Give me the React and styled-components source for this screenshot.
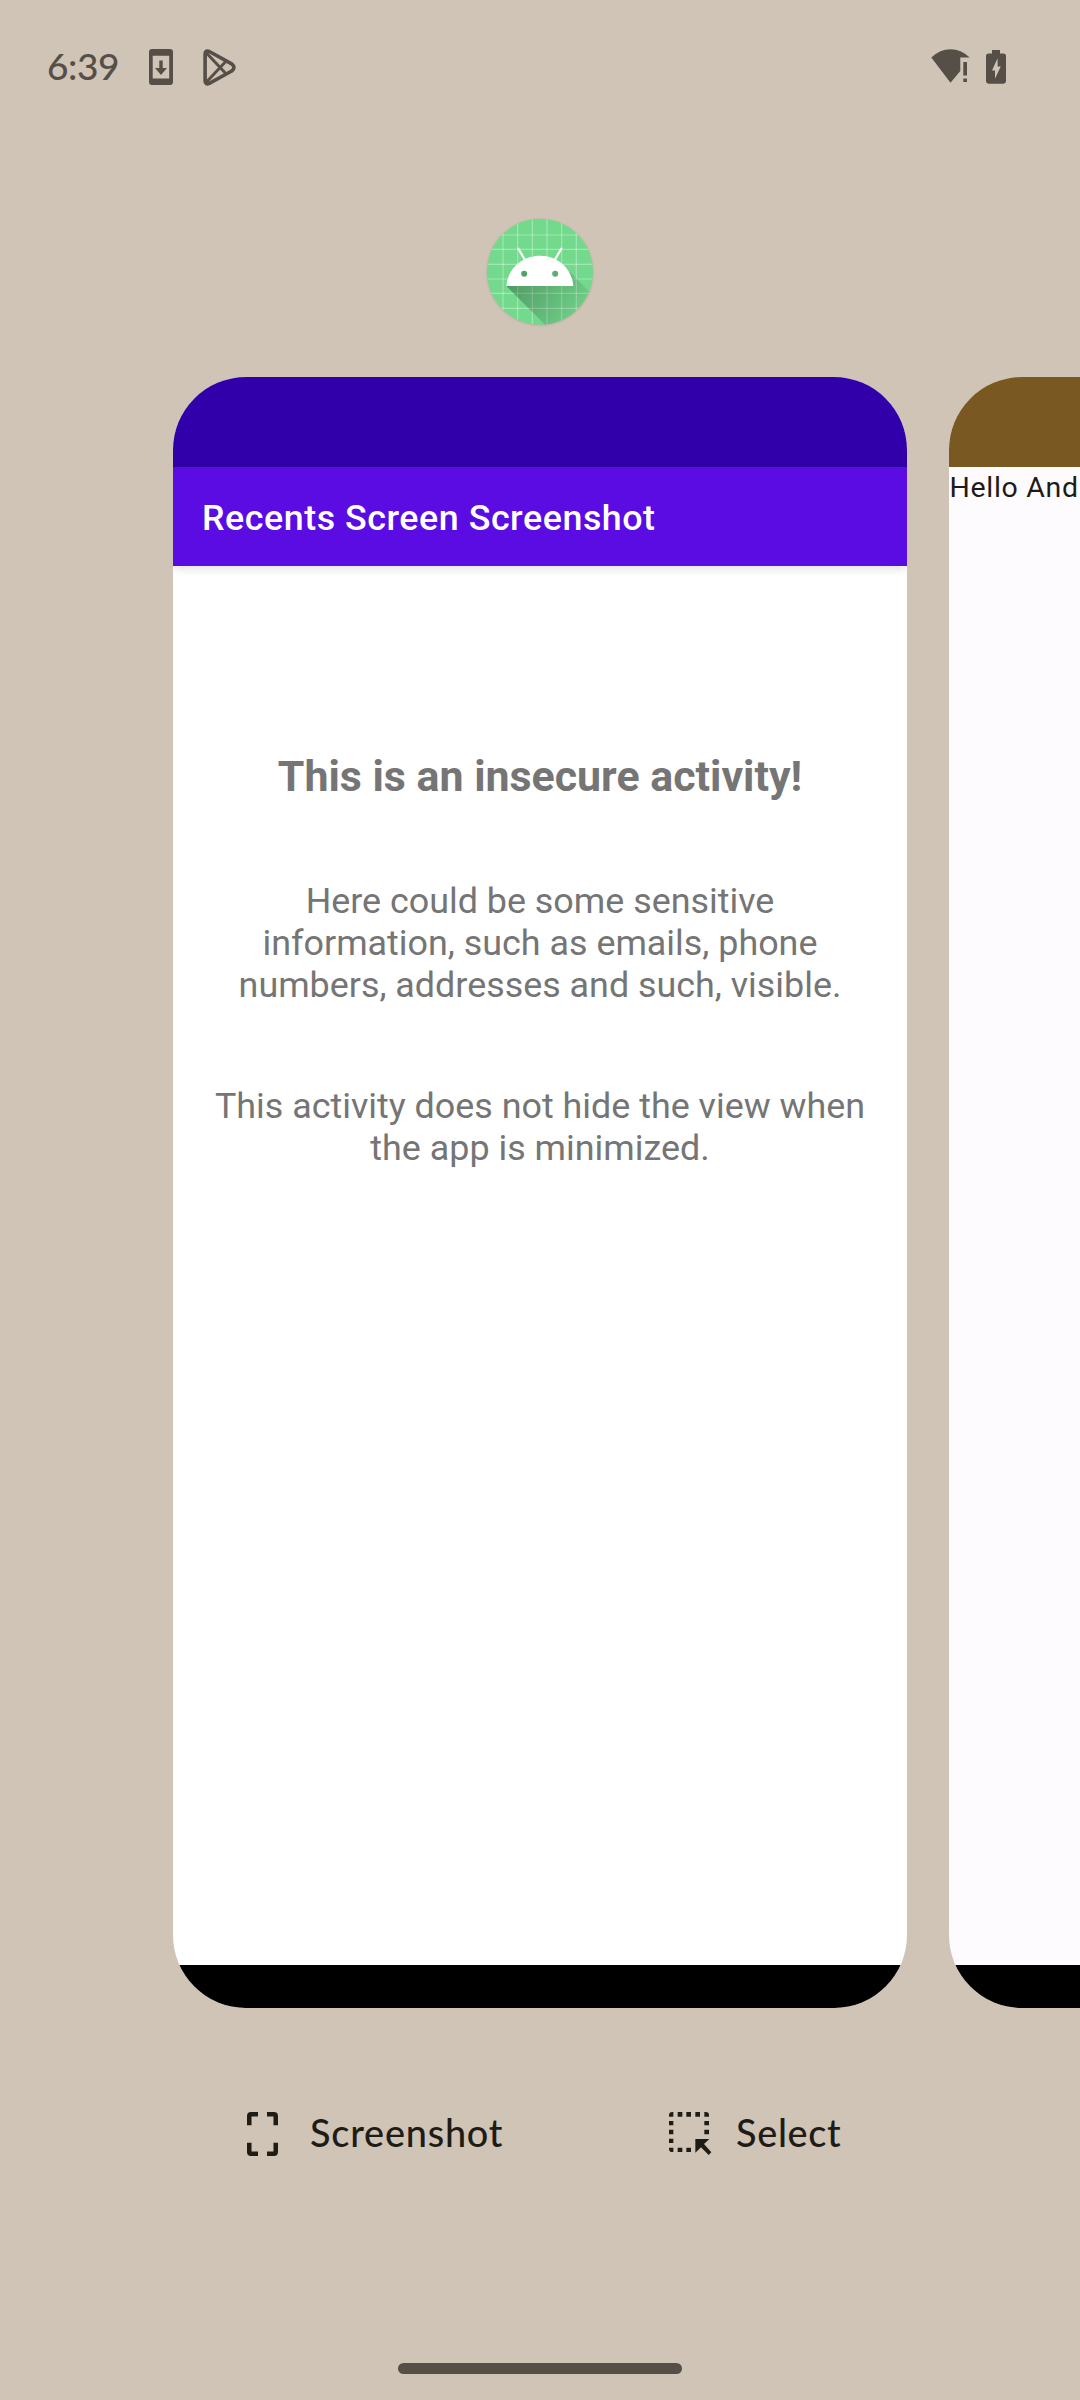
import React from "react";
import styled, { createGlobalStyle } from "styled-components";

const GlobalStyle = createGlobalStyle`
  *, *::before, *::after { box-sizing: border-box; }
  body { margin: 0; background: #d0c4b6; }
`;

const Screen = styled.main`
  width: 1080px;
  height: 2400px;
  overflow: hidden;
  display: flex;
  flex-direction: column;
  background: #d0c4b6;
  font-family: Roboto, "Liberation Sans", sans-serif;
`;

const StatusBar = styled.header`
  height: 134px;
  padding: 0 74px 0 47px;
  display: flex;
  align-items: center;
  justify-content: space-between;
  color: #554f48;
`;

const StatusGroup = styled.div`
  display: flex;
  align-items: center;
  gap: ${(p) => p.$gap}px;
`;

const Clock = styled.time`
  width: 72px;
  padding-bottom: 2px;
  font: 500 37px/44px Lato, sans-serif;
  letter-spacing: -0.4px;
  white-space: nowrap;
`;

const Glyph = styled.svg`
  display: block;
  flex: none;
  width: ${(p) => p.$w}px;
  height: ${(p) => p.$h}px;
`;

const IconRow = styled.div`
  height: 243px;
  padding-top: 71px;
  display: flex;
  justify-content: center;
`;

const Carousel = styled.section`
  height: 1631px;
  padding-left: 173px;
  display: flex;
  gap: 42px;
`;

const Card = styled.article`
  flex: none;
  width: 734px;
  height: 1631px;
  border-radius: 73px;
  overflow: hidden;
  display: flex;
  flex-direction: column;
  background: ${(p) => p.$bg};
`;

const CardStatus = styled.div`
  flex: none;
  height: 89.5px;
  background: ${(p) => p.$bg};
`;

const AppBar = styled.div`
  flex: none;
  height: 99.8px;
  padding: 4px 29px 0;
  display: flex;
  align-items: center;
  background: #5a0ce2;
  box-shadow: 0 2px 10px rgba(0, 0, 0, 0.14);
`;

const Title = styled.h1`
  margin: 0;
  font-size: 35.8px;
  font-weight: 500;
  line-height: 42px;
  letter-spacing: 0.54px;
  color: #fff;
  white-space: nowrap;
`;

const CardBody = styled.div`
  flex: 1;
  padding-top: ${(p) => p.$top}px;
  padding-left: ${(p) => p.$left || 0}px;
  display: flex;
  flex-direction: column;
  align-items: ${(p) => p.$align};
  gap: 78px;
  color: #757575;
`;

const Heading = styled.h2`
  margin: 0 0 1px;
  font-size: 42.9px;
  font-weight: 700;
  line-height: 50px;
`;

const Paragraph = styled.p`
  margin: 0;
  font-size: 35.87px;
  line-height: 42.1px;
  text-align: center;
  white-space: nowrap;
`;

const Greeting = styled.p`
  margin: 0;
  font-size: 28.5px;
  line-height: 40px;
  letter-spacing: 0.7px;
  color: #1d1b16;
  white-space: nowrap;
`;

const NavStrip = styled.div`
  flex: none;
  height: 42.6px;
  background: #000;
`;

const Actions = styled.nav`
  height: 355px;
  padding: 98px 0 0 247px;
  display: flex;
  align-items: flex-start;
`;

const Action = styled.button`
  width: ${(p) => p.$w}px;
  height: 56px;
  padding: 0;
  border: 0;
  background: none;
  display: flex;
  align-items: center;
  gap: ${(p) => p.$gap}px;
  font: 500 37.8px/54px Lato, sans-serif;
  letter-spacing: ${(p) => p.$spacing}px;
  color: #1f1c16;
  text-align: left;
  white-space: nowrap;
`;

const ActionLabel = styled.span`
  padding-bottom: 2px;
`;

const HomeHandle = styled.div`
  width: 284px;
  height: 11px;
  align-self: center;
  border-radius: 6px;
  background: #554f48;
`;

const UpdateIcon = () => (
  <Glyph $w={24} $h={36} viewBox="0 0 24 36">
    <path fill="currentColor" fillRule="evenodd" d="M3 0H21Q24 0 24 3V33Q24 36 21 36H3Q0 36 0 33V3Q0 0 3 0ZM3.7 6.7V29.5H20.2V6.7Z" />
    <path fill="currentColor" d="M10.3 11.6H13.7V19H18L12 26L6 19H10.3Z" />
  </Glyph>
);

const PlayIcon = () => (
  <Glyph $w={33} $h={37} viewBox="0 0 33 37" fill="none" stroke="currentColor" strokeLinejoin="round">
    <path strokeWidth="3.6" d="M2.1 5.2Q2.1 .8 6.3 2.5L28.7 14.8Q33.2 18.4 28.7 22L6.3 34.4Q2.1 36 2.1 31.8Z" />
    <path strokeWidth="2.9" d="M3 3.5L23 24.7M3 33.5L23 12.3" />
  </Glyph>
);

const WifiIcon = () => (
  <Glyph $w={39} $h={36} viewBox="0 0 39 36">
    <path fill="currentColor" d="M.3 8.6Q9 .3 19.5 .3T38.7 8.6H29.3V22L19.5 33.8Z" />
    <path fill="currentColor" d="M32.3 13H36V26.4H32.3ZM32.3 29.4H36V33H32.3Z" />
  </Glyph>
);

const BatteryIcon = () => (
  <Glyph $w={20} $h={34} viewBox="0 0 20 34">
    <path fill="currentColor" fillRule="evenodd" d="M6 0H14V3.5H17.5Q20 3.5 20 6V31.3Q20 33.7 17.5 33.7H2.5Q0 33.7 0 31.3V6Q0 3.5 2.5 3.5H6ZM11.6 8.3L6 20.4H9V28.8L14.7 16.5H11.6Z" />
  </Glyph>
);

const GRID_X = [84, 128, 172, 216, 260, 304];
const GRID_Y = [90, 133, 178, 222, 265, 310];

const AndroidIcon = () => (
  <Glyph $w={130} $h={130} viewBox="0 0 390 390">
    <defs>
      <clipPath id="disc"><circle cx="195" cy="200.5" r="159" /></clipPath>
      <linearGradient id="cast" gradientUnits="userSpaceOnUse" x1="125" y1="225" x2="290" y2="345">
        <stop offset="0" stopColor="#000" stopOpacity=".28" />
        <stop offset="1" stopColor="#000" stopOpacity=".06" />
      </linearGradient>
      <filter id="soft" x="-10%" y="-10%" width="120%" height="120%"><feGaussianBlur stdDeviation="4" /></filter>
    </defs>
    <circle cx="195" cy="202" r="158" opacity=".16" filter="url(#soft)" />
    <g clipPath="url(#disc)">
      <rect width="390" height="390" fill="#73da8d" />
      <g stroke="#fff" strokeOpacity=".34" strokeWidth="3.5">
        {GRID_X.map((x) => <path key={x} d={`M${x} 30V370`} />)}
        {GRID_Y.map((y) => <path key={y} d={`M30 ${y}H370`} />)}
      </g>
      <path fill="url(#cast)" d="M94 243L225 374L370 374V287L282 199Z" />
    </g>
    <path fill="#fff" d="M94 243C98 190 142 152 195 152S291 190 295 243Z" />
    <path stroke="#fff" strokeWidth="6.5" strokeLinecap="round" d="M130 131L151 167M259 131L238 167" />
    <circle cx="147.500" cy="206" r="9" fill="#4fa469" />
    <circle cx="240.500" cy="206" r="9" fill="#5aae73" />
  </Glyph>
);

const ScreenshotIcon = () => (
  <Glyph $w={31} $h={44} viewBox="0 0 93 132" fill="none" stroke="currentColor" strokeWidth="13.5">
    <path d="M33 6.8H12Q6.8 6.8 6.8 12V40M60 6.8H81Q86.200 6.8 86.200 12V40M33 125.200H12Q6.8 125.200 6.8 120V92M60 125.200H81Q86.200 125.200 86.200 120V92" />
  </Glyph>
);

const SelectIcon = () => (
  <Glyph $w={43} $h={44} viewBox="0 0 129 132" fill="currentColor">
    <path d="M0 14V10Q0 0 10 0H13V14ZM106 0H110Q120 0 120 10V14H106ZM0 107H13V120H10Q0 120 0 110Z" />
    <path d="M26 0h14v14h-14ZM52 0h14v14h-14ZM79 0h14v14h-14ZM0 27h13v13h-13ZM0 53h13v14h-13ZM0 80h13v13h-13ZM106 27h14v13h-14ZM106 53h14v14h-14ZM26 107h14v13h-14ZM52 107h14v13h-14Z" />
    <path d="M79 81H121L105 96L127 121L119 129L96 106L79 122Z" />
  </Glyph>
);

export default function App() {
  return (
    <>
      <GlobalStyle />
      <Screen>
        <StatusBar>
          <StatusGroup $gap={30}>
            <Clock>6:39</Clock>
            <UpdateIcon />
            <PlayIcon />
          </StatusGroup>
          <StatusGroup $gap={16}>
            <WifiIcon />
            <BatteryIcon />
          </StatusGroup>
        </StatusBar>
        <IconRow><AndroidIcon /></IconRow>
        <Carousel>
          <Card $bg="#fff">
            <CardStatus $bg="#3100aa" />
            <AppBar><Title>Recents Screen Screenshot</Title></AppBar>
            <CardBody $top={185} $align="center">
              <Heading>This is an insecure activity!</Heading>
              <Paragraph>
                Here could be some sensitive<br />
                information, such as emails, phone<br />
                numbers, addresses and such, visible.
              </Paragraph>
              <Paragraph>
                This activity does not hide the view when<br />
                the app is minimized.
              </Paragraph>
            </CardBody>
            <NavStrip />
          </Card>
          <Card $bg="#fefbff">
            <CardStatus $bg="#795821" />
            <CardBody $top={1} $left={0.5} $align="flex-start">
              <Greeting>Hello And</Greeting>
            </CardBody>
            <NavStrip />
          </Card>
        </Carousel>
        <Actions>
          <Action $w={422} $gap={32} $spacing={0.8}><ScreenshotIcon /><ActionLabel>Screenshot</ActionLabel></Action>
          <Action $w={180} $gap={24} $spacing={0.7}><SelectIcon /><ActionLabel>Select</ActionLabel></Action>
        </Actions>
        <HomeHandle />
      </Screen>
    </>
  );
}
